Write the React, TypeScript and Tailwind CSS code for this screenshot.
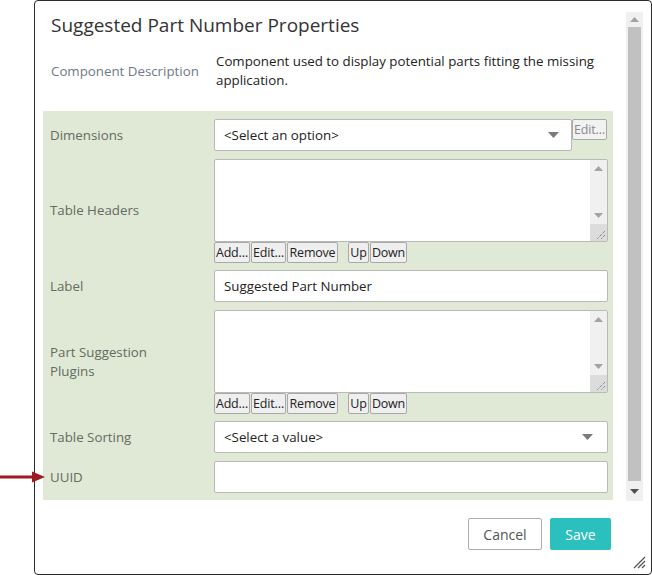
import React from "react";

const font = { fontFamily: '"Open Sans", "Noto Sans", sans-serif' };

function SmallBtn({ children, w, disabled, className = "" }: { children: React.ReactNode; w: string; disabled?: boolean; className?: string }) {
  return (
    <div
      className={`h-[21px] ${w} flex items-center justify-center pt-[1px] border border-[#a9a9a9] rounded-[2px] text-[12.5px] leading-none tracking-[-0.2px] ${disabled ? "bg-[#f2f2f2] text-[#8a8a8a]" : "bg-[#efefef] text-[#222]"} ${className}`}
    >
      {children}
    </div>
  );
}

function Caret() {
  return (
    <svg width="11" height="6" viewBox="0 0 11 6">
      <path d="M0 0 L11 0 L5.5 6 Z" fill="#7a7a7a" />
    </svg>
  );
}

function TextArea() {
  return (
    <div className="h-[83px] w-full border border-[#b9b9b9] rounded-[2px] bg-white flex">
      <div className="flex-1" />
      <div className="w-[17px] flex flex-col">
        <div className="flex-1 bg-[#f0f0f0] flex flex-col items-center justify-between py-[6px]">
          <svg width="9" height="5" viewBox="0 0 9 5"><path d="M0 5 L9 5 L4.5 0 Z" fill="#a3a3a3" /></svg>
          <svg width="9" height="5" viewBox="0 0 9 5"><path d="M0 0 L9 0 L4.5 5 Z" fill="#a3a3a3" /></svg>
        </div>
        <div className="h-[17px] bg-[#dcdcdc] relative">
          <svg className="absolute right-[1px] bottom-[1px]" width="12" height="12" viewBox="0 0 12 12">
            <path d="M11 3 L3 11 M11 7 L7 11" stroke="#666" strokeWidth="1" strokeDasharray="1 1" />
          </svg>
        </div>
      </div>
    </div>
  );
}

function ButtonsRow() {
  return (
    <div className="flex gap-[1px] mb-[-1px]">
      <SmallBtn w="w-[36px]">Add…</SmallBtn>
      <SmallBtn w="w-[35px]">Edit…</SmallBtn>
      <SmallBtn w="w-[51px]">Remove</SmallBtn>
      <SmallBtn w="w-[21px]" className="ml-[9px]">Up</SmallBtn>
      <SmallBtn w="w-[37px]">Down</SmallBtn>
    </div>
  );
}

function Row({ label, children }: { label: React.ReactNode; children: React.ReactNode }) {
  return (
    <div className="flex items-center">
      <div className="w-[164px] text-[13.3px] leading-[19px] text-[#666a60]">{label}</div>
      <div className="flex-1 min-w-0">{children}</div>
    </div>
  );
}

function Input({ children }: { children?: React.ReactNode }) {
  return (
    <div className="h-[32px] w-full border border-[#b9b9b9] rounded-[2px] bg-white flex items-center px-[9px] pt-[2px] text-[13.3px] text-[#222]">
      {children}
    </div>
  );
}

export default function App() {
  return (
    <div className="relative w-[652px] h-[575px] bg-white overflow-hidden" style={font}>
      <div className="ml-[34px] w-[618px] h-[575px] border border-[#2a2a2a] rounded-[4px] flex flex-col pl-[8px] pt-[11px]">
        <div className="flex h-[489px]">
          <div className="w-[570px] flex flex-col">
            <div className="pl-[8px] text-[19px] leading-[26px] text-[#333]">Suggested Part Number Properties</div>
            <div className="flex items-center mt-[14px] pl-[8px]">
              <div className="w-[165px] text-[13.3px] leading-[19px] text-[#6e7987]">Component Description</div>
              <div className="flex-1 text-[13.3px] leading-[19px] text-[#222] pr-[10px]">Component used to display potential parts fitting the missing application.</div>
            </div>
            <div className="mt-[21px] bg-[#dfe9d6] pt-[8px] pb-[7px] pl-[7px] pr-[5px] flex flex-col gap-[8px]">
              <Row label="Dimensions">
                <div className="flex items-start">
                  <div className="h-[32px] w-[358px] border border-[#b9b9b9] rounded-[2px] bg-white flex items-center justify-between pl-[9px] pr-[12px] text-[13.3px] text-[#222]">
                    <span className="pt-[2px]">&lt;Select an option&gt;</span>
                    <Caret />
                  </div>
                  <SmallBtn w="w-[35px]" disabled>Edit…</SmallBtn>
                </div>
              </Row>
              <Row label="Table Headers">
                <TextArea />
                <ButtonsRow />
              </Row>
              <Row label="Label">
                <Input>Suggested Part Number</Input>
              </Row>
              <Row label={<>Part Suggestion<br />Plugins</>}>
                <TextArea />
                <ButtonsRow />
              </Row>
              <Row label="Table Sorting">
                <div className="h-[32px] w-full border border-[#b9b9b9] rounded-[2px] bg-white flex items-center justify-between pl-[9px] pr-[14px] text-[13.3px] text-[#222]">
                  <span className="pt-[2px]">&lt;Select a value&gt;</span>
                  <Caret />
                </div>
              </Row>
              <Row label="UUID">
                <Input />
              </Row>
            </div>
          </div>
          <div className="ml-[13px] w-[17px] bg-[#f0f0f0] flex flex-col items-center">
            <div className="h-[15px] flex items-center">
              <svg width="9" height="5" viewBox="0 0 9 5"><path d="M0 5 L9 5 L4.5 0 Z" fill="#a3a3a3" /></svg>
            </div>
            <div className="w-[13px] h-[454px] bg-[#c1c1c1]" />
            <div className="flex-1 flex items-center">
              <svg width="9" height="5" viewBox="0 0 9 5"><path d="M0 0 L9 0 L4.5 5 Z" fill="#505050" /></svg>
            </div>
          </div>
        </div>
        <div className="flex justify-end gap-[8px] mt-[17px] pr-[40px]">
          <div className="w-[74px] h-[32px] border border-[#adadad] rounded-[2px] flex items-center justify-center text-[14px] text-[#555]">Cancel</div>
          <div className="w-[61px] h-[32px] bg-[#2bbfbe] rounded-[2px] flex items-center justify-center text-[14px] text-white">Save</div>
        </div>
        <div className="flex-1 flex justify-end items-end pr-[5px] pb-[5px]">
          <svg width="14" height="14" viewBox="0 0 14 14">
            <path d="M13 2 L2 13 M13 6 L6 13 M13 10 L10 13" stroke="#555" strokeWidth="1.3" />
          </svg>
        </div>
      </div>
      <svg className="absolute left-0 top-[471px]" width="46" height="12" viewBox="0 0 46 12">
        <path d="M0 6 L34 6" stroke="#9b1c23" strokeWidth="3" />
        <path d="M32 0.5 L45 6 L32 11.5 Z" fill="#9b1c23" />
      </svg>
    </div>
  );
}
